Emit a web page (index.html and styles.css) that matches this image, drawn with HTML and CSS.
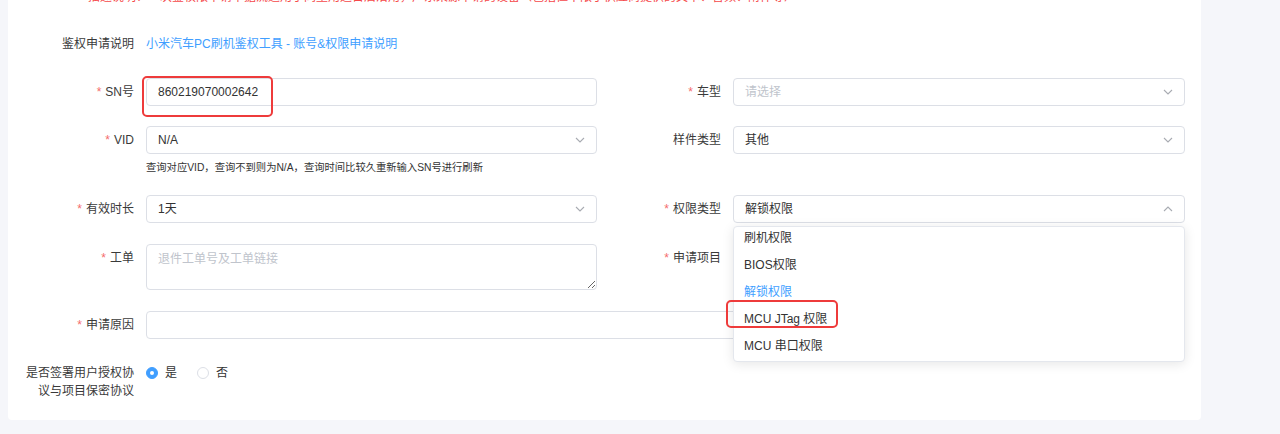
FILE: index.html
```html
<!DOCTYPE html>
<html lang="zh-CN">
<head>
<meta charset="utf-8">
<title>鉴权申请</title>
<link rel="stylesheet" href="styles.css">
</head>
<body>
<div class="card">
  <p class="tip">描述说明：一次鉴权限申请单据流适用于同型用途日后沿用，广东某源申请的设备（包括但不限于供应商提供的文本、音频、附件等）</p>
  <div class="form">
    <div class="item full">
      <label class="lbl">鉴权申请说明</label>
      <div class="ctl"><a class="link">小米汽车PC刷机鉴权工具 - 账号&amp;权限申请说明</a></div>
    </div>

    <div class="item">
      <label class="lbl req">SN号</label>
      <div class="ctl">
        <div class="input">860219070002642</div>
        <span class="mark mark-sn"></span>
      </div>
    </div>
    <div class="item">
      <label class="lbl req">车型</label>
      <div class="ctl">
        <div class="input select"><span class="ph">请选择</span><svg class="arrow" width="10" height="6" viewBox="0 0 10 6"><path d="M1 1l4 4 4-4" fill="none" stroke="#a8abb2" stroke-width="1.1"/></svg></div>
      </div>
    </div>

    <div class="item vid">
      <label class="lbl req">VID</label>
      <div class="ctl">
        <div class="input select"><span>N/A</span><svg class="arrow" width="10" height="6" viewBox="0 0 10 6"><path d="M1 1l4 4 4-4" fill="none" stroke="#a8abb2" stroke-width="1.1"/></svg></div>
        <div class="help">查询对应VID，查询不到则为N/A，查询时间比较久重新输入SN号进行刷新</div>
      </div>
    </div>
    <div class="item">
      <label class="lbl">样件类型</label>
      <div class="ctl">
        <div class="input select"><span>其他</span><svg class="arrow" width="10" height="6" viewBox="0 0 10 6"><path d="M1 1l4 4 4-4" fill="none" stroke="#a8abb2" stroke-width="1.1"/></svg></div>
      </div>
    </div>

    <div class="item">
      <label class="lbl req">有效时长</label>
      <div class="ctl">
        <div class="input select"><span>1天</span><svg class="arrow" width="10" height="6" viewBox="0 0 10 6"><path d="M1 1l4 4 4-4" fill="none" stroke="#a8abb2" stroke-width="1.1"/></svg></div>
      </div>
    </div>
    <div class="item">
      <label class="lbl req">权限类型</label>
      <div class="ctl">
        <div class="input select"><span>解锁权限</span><svg class="arrow" width="10" height="6" viewBox="0 0 10 6"><path d="M1 5l4-4 4 4" fill="none" stroke="#a8abb2" stroke-width="1.1"/></svg></div>
        <div class="dropdown">
          <ul class="options">
            <li>刷机权限</li>
            <li>BIOS权限</li>
            <li class="sel">解锁权限</li>
            <li>MCU JTag 权限</li>
            <li>MCU 串口权限</li>
          </ul>
        </div>
        <span class="mark mark-mcu"></span>
      </div>
    </div>

    <div class="item">
      <label class="lbl req">工单</label>
      <div class="ctl">
        <textarea class="textarea" placeholder="退件工单号及工单链接"></textarea>
      </div>
    </div>
    <div class="item">
      <label class="lbl req">申请项目</label>
      <div class="ctl"></div>
    </div>

    <div class="item full reason">
      <label class="lbl req">申请原因</label>
      <div class="ctl"><div class="input"></div></div>
    </div>

    <div class="item full last">
      <label class="lbl multi">是否签署用户授权协议与项目保密协议</label>
      <div class="ctl radios">
        <span class="radio"><span class="dot on"></span><span class="rtext">是</span></span>
        <span class="radio"><span class="dot"></span><span class="rtext">否</span></span>
      </div>
    </div>
  </div>
</div>
</body>
</html>
```

FILE: styles.css
```css
html, body {
  margin: 0;
  padding: 0;
  background: #f5f6fa;
  overflow: hidden;
}

body {
  font-family: "Liberation Sans", "Noto Sans CJK SC", sans-serif;
  font-size: 12px;
  color: #333;
}

.card {
  margin-left: 8px;
  width: 1193px;
  box-sizing: border-box;
  background: #fff;
  border-radius: 0 0 4px 4px;
  padding: 0 16px 20px 18px;
}

.tip {
  margin: -12px 0 24px 62px;
  line-height: 18px;
  color: #f5484a;
  white-space: nowrap;
}

.form {
  display: grid;
  grid-template-columns: 571px 572px;
  column-gap: 16px;
  align-items: start;
}

.item {
  display: flex;
  margin-bottom: 21px;
}

.item:nth-child(-n+3) {
  margin-bottom: 20px;
}

.item.vid {
  margin-bottom: 19px;
}

.item.full {
  grid-column: 1 / -1;
}

.item.reason {
  margin-bottom: 25px;
}

.item.last {
  margin-bottom: 0;
}

.lbl {
  width: 120px;
  flex-shrink: 0;
  box-sizing: border-box;
  padding-right: 12px;
  text-align: right;
  line-height: 28px;
  color: #3a3a3a;
}

.lbl.req::before {
  content: "*";
  color: #f56c6c;
  margin-right: 4px;
}

.lbl.multi {
  line-height: 18px;
}

.ctl {
  flex: 1;
  position: relative;
  min-width: 0;
}

.link {
  display: inline-block;
  line-height: 28px;
  color: #409eff;
  text-decoration: none;
}

.input {
  height: 28px;
  box-sizing: border-box;
  border: 1px solid #dcdfe6;
  border-radius: 4px;
  padding: 0 11px;
  line-height: 26px;
  color: #333;
  background: #fff;
}

.select {
  display: flex;
  justify-content: space-between;
  align-items: center;
}

.ph {
  color: #c0c4cc;
}

.arrow {
  flex-shrink: 0;
}

.help {
  margin-top: 6px;
  line-height: 16px;
  font-size: 10.3px;
  color: #333;
}

.textarea {
  display: block;
  width: 100%;
  height: 46px;
  box-sizing: border-box;
  border: 1px solid #dcdfe6;
  border-radius: 4px;
  padding: 5px 11px;
  font: inherit;
  line-height: 18px;
  color: #333;
  resize: vertical;
  outline: none;
}

.textarea::placeholder {
  color: #c0c4cc;
}

.dropdown {
  position: absolute;
  top: 31px;
  left: 0;
  right: 0;
  height: 136px;
  box-sizing: border-box;
  overflow: hidden;
  background: #fff;
  border: 1px solid #e4e7ed;
  border-radius: 4px;
  box-shadow: 0 2px 12px rgba(0, 0, 0, 0.1);
  z-index: 10;
}

.options {
  list-style: none;
  margin: -2px 0 0;
  padding: 0;
}

.options li {
  height: 27px;
  line-height: 27px;
  padding: 0 10px;
  color: #333;
  white-space: nowrap;
}

.options li.sel {
  color: #409eff;
}

.mark {
  position: absolute;
  box-sizing: border-box;
  border: 2px solid #ee3b3b;
  border-radius: 5px;
  z-index: 20;
  pointer-events: none;
}

.mark-sn {
  left: -4px;
  top: -2px;
  width: 131px;
  height: 41px;
}

.mark-mcu {
  left: -7px;
  top: 105px;
  width: 112px;
  height: 28px;
}

.radios {
  display: flex;
  align-items: center;
  height: 18px;
}

.radio {
  display: inline-flex;
  align-items: center;
  margin-right: 20px;
}

.dot {
  width: 12px;
  height: 12px;
  box-sizing: border-box;
  border: 1px solid #dcdfe6;
  border-radius: 50%;
  background: #fff;
  position: relative;
}

.dot.on {
  background: #409eff;
  border-color: #409eff;
}

.dot.on::after {
  content: "";
  position: absolute;
  left: 3px;
  top: 3px;
  width: 4px;
  height: 4px;
  border-radius: 50%;
  background: #fff;
}

.rtext {
  margin-left: 7px;
  color: #333;
  line-height: 18px;
}
```
